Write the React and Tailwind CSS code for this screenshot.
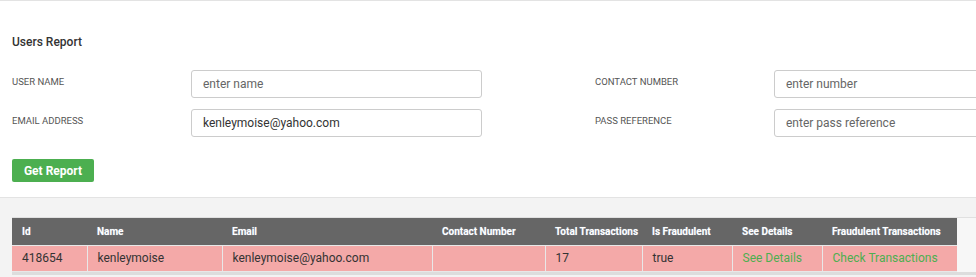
import React from "react";

const font = { fontFamily: "Roboto, 'Liberation Sans', sans-serif" };

function Field({ label, placeholder, value }) {
  return (
    <div className="flex items-start">
      <div className="w-[179px] pt-[6px] text-[9.5px] uppercase text-[#555] leading-[12px]">{label}</div>
      <input
        className="w-[291px] h-[28px] rounded-[3px] border border-[#cccccc] px-[11px] text-[12px] text-[#333] placeholder:text-[#666] outline-none bg-white"
        placeholder={placeholder}
        defaultValue={value}
        style={font}
      />
    </div>
  );
}

const cols = [
  ["Id", 75],
  ["Name", 135],
  ["Email", 210],
  ["Contact Number", 113],
  ["Total Transactions", 97],
  ["Is Fraudulent", 90],
  ["See Details", 90],
  ["Fraudulent Transactions", 135],
];

export default function App() {
  return (
    <div className="w-[976px] h-[277px] overflow-hidden bg-[#f3f3f3]" style={font}>
      <div className="bg-white border-t border-b border-[#e3e3e3] px-[12px] pt-[33px] pb-[15px]">
        <div className="text-[12px] font-medium text-[#333] leading-[16px]">Users Report</div>
        <div className="mt-[20px] flex flex-col gap-[11px] w-[1100px]">
          <div className="flex gap-[113px]">
            <Field label="User Name" placeholder="enter name" />
            <Field label="Contact Number" placeholder="enter number" />
          </div>
          <div className="flex gap-[113px]">
            <Field label="Email Address" placeholder="enter email" value="kenleymoise@yahoo.com" />
            <Field label="Pass Reference" placeholder="enter pass reference" />
          </div>
        </div>
        <button className="mt-[22px] h-[23px] w-[82px] rounded-[2px] bg-[#4caf50] text-white text-[12px] font-bold block" style={font}>
          Get Report
        </button>
      </div>
      <div className="pt-[19px] pl-[12px]">
        <div className="bg-[#f7f7f7] border-t border-[#e0e0e0]">
          <table className="border-collapse table-fixed w-[945px] text-left">
            <thead>
              <tr className="bg-[#666666] h-[27px]">
                {cols.map(([c, w]) => (
                  <th
                    key={c}
                    style={{ width: w, textShadow: "0 0 1px #9ab" }}
                    className="px-[10px] text-[10px] font-bold text-white whitespace-nowrap"
                  >
                    {c}
                  </th>
                ))}
              </tr>
            </thead>
            <tbody>
              <tr className="bg-[#f4a9a8] h-[26px] text-[12px] text-[#333]">
                <td className="px-[10px] border border-[#e8e8e8] border-l-0">418654</td>
                <td className="px-[10px] border border-[#e8e8e8]">kenleymoise</td>
                <td className="px-[10px] border border-[#e8e8e8]">kenleymoise@yahoo.com</td>
                <td className="px-[10px] border border-[#e8e8e8]"></td>
                <td className="px-[10px] border border-[#e8e8e8]">17</td>
                <td className="px-[10px] border border-[#e8e8e8]">true</td>
                <td className="px-[10px] border border-[#e8e8e8] text-[#4caf50]">See Details</td>
                <td className="px-[10px] border border-[#e8e8e8] border-r-0 text-[#4caf50] whitespace-nowrap">Check Transactions</td>
              </tr>
            </tbody>
          </table>
          <div className="h-[3px] bg-[#dddddd]"></div>
        </div>
      </div>
    </div>
  );
}
